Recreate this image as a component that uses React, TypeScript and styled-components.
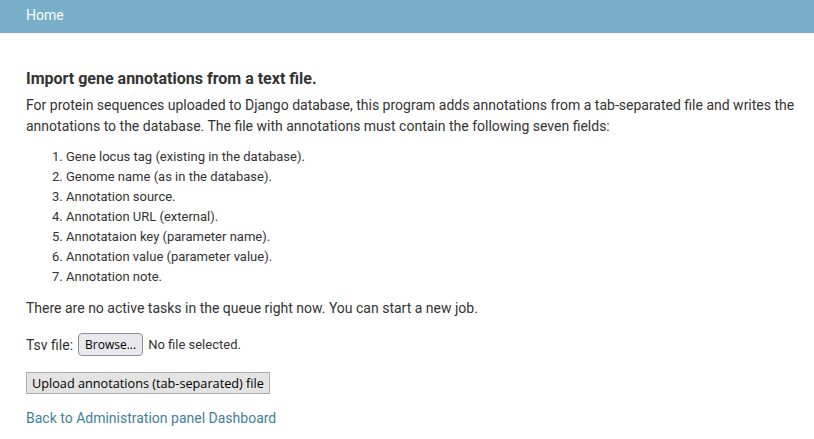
import React from "react";
import styled, { createGlobalStyle } from "styled-components";

const GlobalStyle = createGlobalStyle`
  html, body {
    margin: 0;
    padding: 0;
    background: #ffffff;
  }
  body {
    font-family: Roboto, "Liberation Sans", sans-serif;
    font-size: 14px;
    color: #333333;
  }
`;

const Header = styled.div`
  background: #79aec8;
  height: 33px;
  box-sizing: border-box;
  padding: 6px 26px 0;
  a {
    color: #f5fdff;
    font-size: 14px;
    line-height: 18px;
    text-decoration: none;
  }
`;

const Content = styled.div`
  padding: 36px 14px 0 26px;
`;

const Title = styled.h1`
  font-size: 16px;
  font-weight: 700;
  color: #333;
  margin: 0 0 6px;
  line-height: 20px;
`;

const Text = styled.p`
  margin: 0;
  line-height: 21px;
  font-size: 14px;
`;

const FieldList = styled.ol`
  margin: 10px 0 11px;
  padding-left: 40px;
  font-size: 13px;
  line-height: 20px;
`;

const FormRow = styled.div`
  display: flex;
  align-items: center;
  gap: 5px;
  margin: 14px 0 16px;
  font-size: 14px;
`;

const BrowseButton = styled.button`
  font-family: "Open Sans", "Liberation Sans", sans-serif;
  font-size: 12px;
  color: #000;
  background: #e9e9ed;
  border: 1px solid #8f8f9d;
  border-radius: 4px;
  height: 23px;
  padding: 0 6px;
`;

const FileName = styled.span`
  font-size: 13px;
`;

const SubmitButton = styled.button`
  font-family: "Open Sans", "Liberation Sans", sans-serif;
  font-size: 12.7px;
  color: #000;
  background: #e3e3e3;
  border: 1px solid #adadad;
  border-radius: 0;
  height: 22px;
  padding: 0 5px;
  display: block;
`;

const BackLink = styled.a`
  display: inline-block;
  margin-top: 16px;
  color: #447e9b;
  text-decoration: none;
  font-size: 14px;
`;

const fields = [
  "Gene locus tag (existing in the database).",
  "Genome name (as in the database).",
  "Annotation source.",
  "Annotation URL (external).",
  "Annotataion key (parameter name).",
  "Annotation value (parameter value).",
  "Annotation note.",
];

export default function App() {
  return (
    <>
      <GlobalStyle />
      <Header>
        <a href="#">Home</a>
      </Header>
      <Content>
        <Title>Import gene annotations from a text file.</Title>
        <Text>
          For protein sequences uploaded to Django database, this program adds
          annotations from a tab-separated file and writes the annotations to
          the database. The file with annotations must contain the following
          seven fields:
        </Text>
        <FieldList>
          {fields.map((f) => (
            <li key={f}>{f}</li>
          ))}
        </FieldList>
        <Text>
          There are no active tasks in the queue right now. You can start a new
          job.
        </Text>
        <FormRow>
          <span>Tsv file:</span>
          <BrowseButton type="button">Browse...</BrowseButton>
          <FileName>No file selected.</FileName>
        </FormRow>
        <SubmitButton type="button">
          Upload annotations (tab-separated) file
        </SubmitButton>
        <BackLink href="#">Back to Administration panel Dashboard</BackLink>
      </Content>
    </>
  );
}
